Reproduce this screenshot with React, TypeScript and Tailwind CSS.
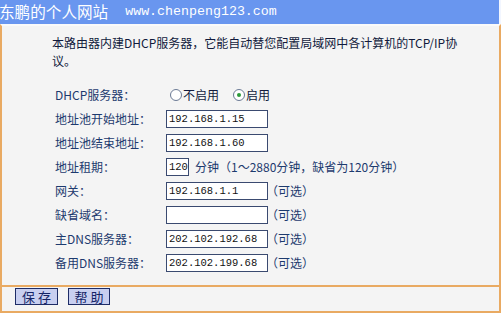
import React from "react";

function Field({ w = "w-[102px]", value }: { w?: string; value: string }) {
  return (
    <div
      className={`${w} h-[18px] bg-white border border-[#3a4a70] flex items-center pl-[2px] font-['Liberation_Mono',monospace] text-[10.5px] text-[#111] leading-none`}
    >
      {value}
    </div>
  );
}

function Row({ label, children }: { label: string; children: React.ReactNode }) {
  return (
    <div className="h-[24px] flex items-center">
      <div className="w-[111px] text-[#1d3a6e]">{label}</div>
      <div className="flex items-center">{children}</div>
    </div>
  );
}

function Opt() {
  return <span className="ml-[-2px] text-[#1d3a6e]">（可选）</span>;
}

export default function App() {
  return (
    <div className="w-[504px] h-[313px] bg-white font-['Noto_Sans_CJK_SC',sans-serif] text-[12px] leading-[14px] overflow-hidden">
      <div className="w-[501px]">
        <div className="h-[24px] bg-[#6996ef] flex items-center text-white border-r-2 border-[#f2f6ff]">
          <span className="text-[15.6px] leading-none ml-[-1px]">东鹏的个人网站</span>
          <span className="ml-[17px] font-['Liberation_Mono',monospace] text-[13.3px] leading-none">www.chenpeng123.com</span>
        </div>
        <div className="h-[289px] bg-[#f4f4f4] border-l-2 border-r-2 border-b-2 border-[#e9aa62] border-t-2 border-t-[#fafafa] flex flex-col">
          <div className="pl-[50px] pt-[8px] text-[#111a3c] leading-[18px]">
            <div className="whitespace-nowrap">本路由器内建DHCP服务器，它能自动替您配置局域网中各计算机的TCP/IP协</div>
            <div>议。</div>
          </div>
          <div className="pl-[53px] mt-[13px]">
            <Row label="DHCP服务器：">
              <div className="flex items-center ml-[4px]">
                <span className="w-[12px] h-[12px] rounded-full border border-[#6b7a95] bg-white" />
                <span className="ml-[1px] text-[#111a3c]">不启用</span>
                <span className="ml-[14px] w-[12px] h-[12px] rounded-full border border-[#6b7a95] bg-white flex items-center justify-center">
                  <span className="w-[4px] h-[4px] rounded-full bg-[#2c9a3a]" />
                </span>
                <span className="ml-[1px] text-[#111a3c]">启用</span>
              </div>
            </Row>
            <Row label="地址池开始地址：">
              <Field value="192.168.1.15" />
            </Row>
            <Row label="地址池结束地址：">
              <Field value="192.168.1.60" />
            </Row>
            <Row label="地址租期：">
              <Field w="w-[23px]" value="120" />
              <span className="ml-[6px] text-[#1d3a6e]">分钟（1～2880分钟，缺省为120分钟）</span>
            </Row>
            <Row label="网关：">
              <Field value="192.168.1.1" />
              <Opt />
            </Row>
            <Row label="缺省域名：">
              <Field value="" />
              <Opt />
            </Row>
            <Row label="主DNS服务器：">
              <Field value="202.102.192.68" />
              <Opt />
            </Row>
            <Row label="备用DNS服务器：">
              <Field value="202.102.199.68" />
              <Opt />
            </Row>
          </div>
          <div className="mt-[10px] border-t-2 border-[#e9aa62] flex-1 flex items-start pt-[1px] pl-[13px] gap-[10px]">
            <button className="w-[43px] h-[17px] bg-[#c8cff0] border border-[#1e2c66] text-[#142466] text-[13px] leading-none flex items-center justify-center tracking-[3px] pl-[3px]">
              保存
            </button>
            <button className="w-[42px] h-[17px] bg-[#c8cff0] border border-[#1e2c66] text-[#142466] text-[13px] leading-none flex items-center justify-center tracking-[3px] pl-[3px]">
              帮助
            </button>
          </div>
        </div>
      </div>
    </div>
  );
}
